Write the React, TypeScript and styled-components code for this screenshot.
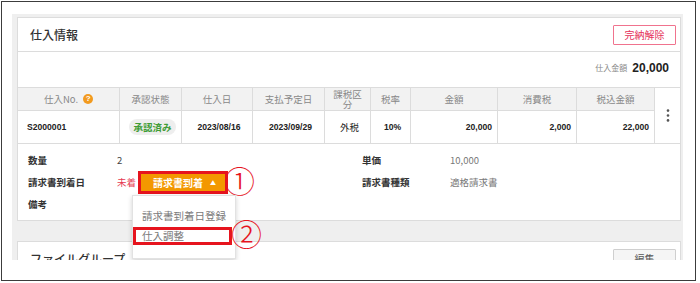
import React from 'react'
import styled, { createGlobalStyle } from 'styled-components'

const JP = `'Noto Sans CJK JP', 'Noto Sans', sans-serif`
const NUM = `'Liberation Sans', 'Noto Sans CJK JP', sans-serif`
const MARK = '#e6141e'
const LINE = '#dcdcdc'

const GlobalStyle = createGlobalStyle`
  body {
    margin: 0;
    background: #fff;
    font-family: ${JP};
    color: #333;
  }
  * {
    box-sizing: border-box;
  }
`

const Frame = styled.div`
  width: 695px;
  height: 280px;
  margin: 1px 0 0 1px;
  border: 1px solid #3c3c3c;
  padding: 12px 0 0 10px;
`

const Screen = styled.div`
  width: 671px;
  height: 246px;
  overflow: hidden;
  background: #efefef;
  padding: 3px 2px 0 5px;
  display: flex;
  flex-direction: column;
  gap: 20px;
`

const Card = styled.section`
  flex-shrink: 0;
  background: #fff;
  border: 1px solid ${LINE};
`

const CardHeader = styled.header`
  height: 34px;
  display: flex;
  align-items: center;
  justify-content: space-between;
  padding: 0 4px 0 12px;
  border-bottom: 1px solid ${LINE};
`

const Title = styled.h2`
  margin: 0;
  font-size: 12px;
  font-weight: 500;
  color: #333;
`

const OutlineButton = styled.button<{ $danger?: boolean }>`
  width: 63px;
  height: 20px;
  padding: 0;
  font-family: ${JP};
  font-size: 10px;
  background: ${(p) => (p.$danger ? '#fff' : '#f5f5f5')};
  color: ${(p) => (p.$danger ? '#e5305a' : '#555')};
  border: 1px solid ${(p) => (p.$danger ? '#f0738e' : '#cfcfcf')};
  border-radius: 1px;
`

const TotalRow = styled.div`
  height: 35px;
  display: flex;
  align-items: center;
  justify-content: flex-end;
  gap: 5px;
  padding: 0 11px 4px 0;
`

const TotalLabel = styled.span`
  font-size: 8px;
  color: #888;
`

const TotalValue = styled.span`
  font-family: ${NUM};
  font-size: 12px;
  font-weight: 700;
  color: #222;
`

const Grid = styled.div`
  display: grid;
  grid-template-columns: 101px 62px 71px 72px 46px 40px 87px 79px 78px 1fr;
  grid-template-rows: 24px 33px;
`

const Head = styled.div`
  display: flex;
  align-items: center;
  justify-content: center;
  padding: 0 7px;
  background: #f2f2f2;
  border-top: 1px solid ${LINE};
  border-bottom: 1px solid ${LINE};
  border-left: 1px solid ${LINE};
  font-size: 9.5px;
  line-height: 10px;
  color: #888;
  text-align: center;
  &:first-child {
    border-left: none;
  }
`

const KebabCell = styled.div`
  grid-row: 1 / span 2;
  grid-column: 10;
  display: flex;
  align-items: center;
  justify-content: center;
  border-top: 1px solid ${LINE};
  border-bottom: 1px solid ${LINE};
  border-left: 1px solid ${LINE};
`

const Cell = styled.div<{ $align?: 'flex-start' | 'center' | 'flex-end'; $first?: boolean }>`
  grid-row: 2;
  display: flex;
  align-items: center;
  justify-content: ${(p) => p.$align ?? 'center'};
  padding: 0 5px 0 9px;
  border-bottom: 1px solid ${LINE};
  border-left: ${(p) => (p.$first ? 'none' : `1px solid ${LINE}`)};
  font-family: ${NUM};
  font-size: 8.6px;
  font-weight: 700;
  color: #222;
`

const Help = styled.span`
  display: inline-flex;
  align-items: center;
  justify-content: center;
  width: 10px;
  height: 10px;
  margin-left: 5px;
  border-radius: 50%;
  background: #f29a1f;
  color: #fff;
  font-family: ${NUM};
  font-size: 8px;
  font-weight: 700;
`

const StatusPill = styled.span`
  display: inline-block;
  width: 52px;
  height: 16px;
  line-height: 16px;
  text-align: center;
  border-radius: 8px;
  background: #eeeeee;
  color: #3f9c35;
  font-family: ${JP};
  font-size: 9.5px;
  font-weight: 700;
`

const TaxText = styled.span`
  font-family: ${JP};
  font-weight: 400;
  font-size: 9.5px;
`

const Details = styled.div`
  display: grid;
  grid-template-columns: 89px 245px 88px 1fr;
  grid-auto-rows: 22px;
  align-items: center;
  padding: 5px 0 5px 10px;
  font-size: 9.5px;
`

const Label = styled.span`
  font-weight: 700;
  color: #333;
`

const Value = styled.span<{ $muted?: boolean }>`
  color: ${(p) => (p.$muted ? '#777' : '#444')};
`

const ArrivalCell = styled.div`
  display: flex;
  align-items: center;
  gap: 5px;
`

const Unarrived = styled.span`
  color: #e53950;
`

const ArrivalWrap = styled.div`
  position: relative;
  display: flex;
`

const ArrivalButton = styled.button`
  width: 84px;
  height: 17px;
  padding: 0 0 0 12px;
  display: flex;
  align-items: center;
  gap: 7px;
  border: none;
  background: #f39800;
  color: #fff;
  font-family: ${JP};
  font-size: 10px;
  font-weight: 700;
  outline: 3px solid ${MARK};
`

const Caret = styled.span`
  font-size: 6px;
`

const Circled = styled.span<{ $top: number; $left: string }>`
  position: absolute;
  top: ${(p) => p.$top}px;
  left: ${(p) => p.$left};
  font-family: ${JP};
  font-size: 31px;
  line-height: 1;
  font-weight: 300;
  color: ${MARK};
`

const Menu = styled.div`
  position: absolute;
  top: 21px;
  left: -9px;
  z-index: 5;
  width: 104px;
  padding: 9px 0 11px;
  background: #fff;
  border: 1px solid #e2e2e2;
  box-shadow: 0 2px 5px rgba(0, 0, 0, 0.18);
`

const MenuItem = styled.div<{ $marked?: boolean }>`
  position: relative;
  height: ${(p) => (p.$marked ? 18 : 21)}px;
  margin: ${(p) => (p.$marked ? '1px 3px 2px 0' : '0')};
  padding-left: ${(p) => (p.$marked ? 6 : 9)}px;
  border: ${(p) => (p.$marked ? `3px solid ${MARK}` : 'none')};
  display: flex;
  align-items: center;
  font-size: 10.5px;
  color: #7a7a7a;
  white-space: nowrap;
`

function Kebab() {
  return (
    <svg width="4" height="13" viewBox="0 0 4 13">
      <circle cx="2" cy="1.6" r="1.3" fill="#555" />
      <circle cx="2" cy="6.5" r="1.3" fill="#555" />
      <circle cx="2" cy="11.4" r="1.3" fill="#555" />
    </svg>
  )
}

export default function App() {
  return (
    <>
      <GlobalStyle />
      <Frame>
        <Screen>
          <Card>
            <CardHeader>
              <Title>仕入情報</Title>
              <OutlineButton $danger>完納解除</OutlineButton>
            </CardHeader>

            <TotalRow>
              <TotalLabel>仕入金額</TotalLabel>
              <TotalValue>20,000</TotalValue>
            </TotalRow>

            <Grid>
              <Head>
                仕入No.<Help>?</Help>
              </Head>
              <Head>承認状態</Head>
              <Head>仕入日</Head>
              <Head>支払予定日</Head>
              <Head>課税区分</Head>
              <Head>税率</Head>
              <Head>金額</Head>
              <Head>消費税</Head>
              <Head>税込金額</Head>
              <KebabCell>
                <Kebab />
              </KebabCell>

              <Cell $first $align="flex-start">S2000001</Cell>
              <Cell>
                <StatusPill>承認済み</StatusPill>
              </Cell>
              <Cell>2023/08/16</Cell>
              <Cell>2023/09/29</Cell>
              <Cell>
                <TaxText>外税</TaxText>
              </Cell>
              <Cell>10%</Cell>
              <Cell $align="flex-end">20,000</Cell>
              <Cell $align="flex-end">2,000</Cell>
              <Cell $align="flex-end">22,000</Cell>
            </Grid>

            <Details>
              <Label>数量</Label>
              <Value>2</Value>
              <Label>単価</Label>
              <Value $muted>10,000</Value>

              <Label>請求書到着日</Label>
              <ArrivalCell>
                <Unarrived>未着</Unarrived>
                <ArrivalWrap>
                  <ArrivalButton>
                    請求書到着<Caret>▲</Caret>
                  </ArrivalButton>
                  <Circled $top={-10} $left="calc(100% - 1px)">①</Circled>
                  <Menu>
                    <MenuItem>請求書到着日登録</MenuItem>
                    <MenuItem $marked>
                      仕入調整
                      <Circled $top={-13} $left="calc(100% + 2px)">②</Circled>
                    </MenuItem>
                  </Menu>
                </ArrivalWrap>
              </ArrivalCell>
              <Label>請求書種類</Label>
              <Value $muted>適格請求書</Value>

              <Label>備考</Label>
            </Details>
          </Card>

          <Card>
            <CardHeader>
              <Title>ファイルグループ</Title>
              <OutlineButton>編集</OutlineButton>
            </CardHeader>
          </Card>
        </Screen>
      </Frame>
    </>
  )
}
